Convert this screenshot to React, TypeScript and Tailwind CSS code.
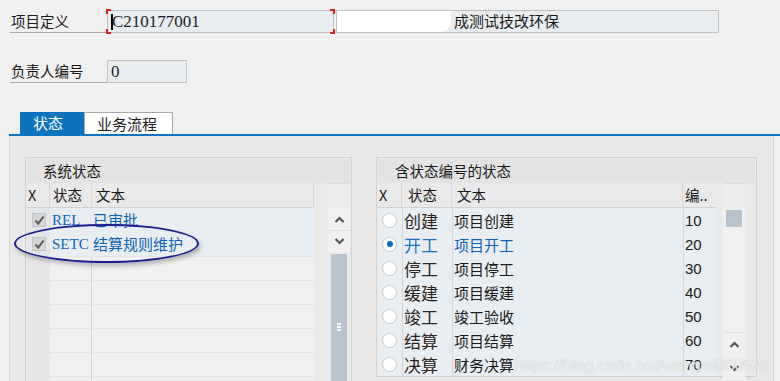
import React from 'react';

const sans = "font-['Noto_Sans_CJK_SC','Liberation_Sans',sans-serif]";
const serif = "font-['Liberation_Serif','Noto_Sans_CJK_SC',serif]";

const Check = () => (
    <span className="w-[14px] h-[14px] bg-[#d6d6d6] border border-[#c4c4c4] flex items-center justify-center">
        <svg width="11" height="11" viewBox="0 0 11 11">
            <path d="M1.5 5.5 L4.2 8.6 L9.5 1.5" stroke="#5a5a5a" strokeWidth="2" fill="none" />
        </svg>
    </span>
);

const Radio = ({ on }: { on?: boolean }) => (
    <span className="w-[15px] h-[15px] rounded-full bg-white border border-[#c8c8c8] flex items-center justify-center">
        {on && <span className="w-[6px] h-[6px] rounded-full bg-[#0a6ebd]" />}
    </span>
);

const ArrowUp = () => (
    <svg width="11" height="7" viewBox="0 0 11 7"><path d="M1.5 6 L5.5 2 L9.5 6" stroke="#555" strokeWidth="2.2" fill="none" /></svg>
);
const ArrowDown = () => (
    <svg width="11" height="7" viewBox="0 0 11 7"><path d="M1.5 1 L5.5 5 L9.5 1" stroke="#555" strokeWidth="2.2" fill="none" /></svg>
);

const statuses = [
    { s: '创建', t: '项目创建', n: '10' },
    { s: '开工', t: '项目开工', n: '20', on: true },
    { s: '停工', t: '项目停工', n: '30' },
    { s: '缓建', t: '项目缓建', n: '40' },
    { s: '竣工', t: '竣工验收', n: '50' },
    { s: '结算', t: '项目结算', n: '60' },
    { s: '决算', t: '财务决算', n: '70' },
];

export default function App() {
    return (
        <div className={`relative w-[780px] h-[381px] overflow-hidden bg-[#f0f0f0] text-[#1a1a1a] ${sans}`}>
            {/* header fields */}
            <div className="pt-[10px] pl-[10px]">
                <div className="flex h-[23px]">
                    <div className="w-[97px] h-[23px] border-b border-[#a8a8a8] text-[14.5px] leading-[22px] pl-[1px]">项目定义</div>
                    <div className="relative w-[227px] h-[23px] bg-[#e9ecef] border border-[#c0c0c0] flex items-center pl-[3px]">
                        <span className="w-[2px] h-[16px] bg-black" />
                        <span className={`${serif} text-[17px] text-[#1c1c2c] -ml-[1px]`}>C210177001</span>
                        <span className="absolute -left-[2px] -top-[2px] w-[5px] h-[5px] border-l-2 border-t-2 border-[#e0201c]" />
                        <span className="absolute -right-[2px] -top-[2px] w-[5px] h-[5px] border-r-2 border-t-2 border-[#e0201c]" />
                        <span className="absolute -left-[2px] -bottom-[2px] w-[5px] h-[5px] border-l-2 border-b-2 border-[#e0201c]" />
                        <span className="absolute -right-[2px] -bottom-[2px] w-[5px] h-[5px] border-r-2 border-b-2 border-[#e0201c]" />
                    </div>
                    <div className="w-[383px] h-[23px] bg-[#e9ecef] border border-[#c0c0c0] flex items-center ml-[2px] overflow-hidden">
                        <span className="w-[114px] h-full bg-white rounded-br-[10px] shrink-0" />
                        <span className="text-[15px] ml-[3px]">成测试技改环保</span>
                    </div>
                </div>
                <div className="flex h-[23px] mt-[27px]">
                    <div className="w-[97px] h-[23px] border-b border-[#a8a8a8] text-[14.5px] leading-[22px] pl-[1px]">负责人编号</div>
                    <div className="w-[80px] h-[23px] bg-[#e9ecef] border border-[#c0c0c0] flex items-center pl-[3px]">
                        <span className={`${serif} text-[17px] text-[#1c1c2c]`}>0</span>
                    </div>
                </div>
            </div>

            {/* tabs */}
            <div className="mt-[29px] ml-[20px] flex h-[22px]">
                <div className="w-[64px] bg-[#0b74bd] text-white text-[15px] leading-[22px] pl-[13px]">状态</div>
                <div className="w-[89px] bg-white border border-b-0 border-[#a8a8a8] text-[15px] leading-[21px] pl-[12px]">业务流程</div>
            </div>
            <div className="ml-[9px] h-[2px] bg-[#0b74bd]" />
            <div className="ml-[9px] w-[765px] h-[250px] bg-[#e8e8e8] border-l border-r border-[#d6d6d6] pt-[21px] pl-[15px] flex gap-[24px]">
                {/* left group */}
                <div className="w-[327px] h-[240px] border border-[#d2d2d2] bg-[#e9e9e9] p-[1px]">
                    <div className="h-[24px] bg-[#e3e3e3] text-[14.5px] leading-[24px] pl-[16px]">系统状态</div>
                    <div className="flex">
                        <div className="w-[287px]">
                            <div className="flex h-[25px] bg-[#e9e9e9] border-b border-[#d2d2d2] text-[14.5px] leading-[24px]">
                                <div className="w-[23px] border-r border-[#d6d6d6] pl-[1px]">X</div>
                                <div className="w-[42px] border-r border-[#d6d6d6] pl-[3px]">状态</div>
                                <div className="flex-1 border-r border-[#d6d6d6] pl-[4px]">文本</div>
                            </div>
                            {[
                                { s: 'REL', t: '已审批' },
                                { s: 'SETC', t: '结算规则维护' },
                            ].map(r => (
                                <div key={r.s} className="flex h-[24px] bg-[#e8edf2] items-center text-[#0c63b6]">
                                    <div className="w-[23px] h-full bg-[#e3e6ea] flex items-center justify-center pl-[1px]"><Check /></div>
                                    <div className={`w-[42px] ${serif} text-[15px] pl-[2px] whitespace-nowrap`}>{r.s}</div>
                                    <div className="flex-1 text-[15px] pl-[1px]">{r.t}</div>
                                </div>
                            ))}
                            {Array.from({ length: 6 }).map((_, i) => (
                                <div key={i} className="flex h-[24px] bg-[#f0f0f0] border-t border-[#e6e6e6]">
                                    <div className="w-[23px] h-full bg-[#e6e6e6]" />
                                    <div className="w-[42px] h-full border-r border-[#d2d2d2]" />
                                    <div className="flex-1" />
                                </div>
                            ))}
                        </div>
                        <div className="w-[14px]" />
                        <div className="w-[22px] flex flex-col">
                            <div className="h-[25px] bg-[#ececec] border-t border-[#dcdcdc]" />
                            <div className="h-[22px] bg-[#f0f0f0] flex items-center justify-center"><ArrowUp /></div>
                            <div className="h-[22px] bg-[#f0f0f0] border-t border-[#e0e0e0] flex items-center justify-center"><ArrowDown /></div>
                            <div className="flex-1 mx-[3px] mt-[2px] bg-[#b9c3cd] flex items-center justify-center">
                                <div className="flex flex-col gap-[1px]">
                                    <span className="w-[4px] h-[2px] bg-white" />
                                    <span className="w-[4px] h-[2px] bg-white" />
                                    <span className="w-[4px] h-[2px] bg-white" />
                                </div>
                            </div>
                        </div>
                    </div>
                </div>

                {/* right group */}
                <div className="w-[381px] h-[220px] border border-[#d2d2d2] bg-[#e9e9e9] p-[1px]">
                    <div className="h-[24px] bg-[#e3e3e3] text-[14.5px] leading-[24px] pl-[17px]">含状态编号的状态</div>
                    <div className="flex">
                        <div className="w-[338px]">
                            <div className="flex h-[25px] bg-[#e9e9e9] border-b border-[#d2d2d2] text-[14.5px] leading-[24px]">
                                <div className="w-[24px] border-r border-[#d6d6d6] pl-[1px]">X</div>
                                <div className="w-[50px] border-r border-[#d6d6d6] pl-[6px]">状态</div>
                                <div className="w-[231px] border-r border-[#d6d6d6] pl-[5px]">文本</div>
                                <div className="flex-1 pl-[2px]">编..</div>
                            </div>
                            {statuses.map(r => (
                                <div key={r.s} className="flex h-[24px] bg-[#e8edf2] items-center">
                                    <div className="w-[24px] h-full flex items-center pl-[4px]"><Radio on={r.on} /></div>
                                    <div className={`w-[50px] h-full border-l border-[#d6d6d6] text-[17px] leading-[25px] pl-[1px] ${r.on ? 'text-[#1a74c6]' : 'text-[#2a2320]'}`}>{r.s}</div>
                                    <div className={`w-[231px] h-full border-l border-[#d6d6d6] text-[15px] leading-[25px] pl-[1px] ${r.on ? 'text-[#0c63b6]' : ''}`}>{r.t}</div>
                                    <div className="flex-1 h-full border-l border-[#d6d6d6] text-[15px] leading-[25px] pl-[1px] font-['Liberation_Sans',sans-serif]">{r.n}</div>
                                </div>
                            ))}
                        </div>
                        <div className="w-[7px]" />
                        <div className="w-[22px] flex flex-col">
                            <div className="h-[25px] bg-[#ececec] border-t border-[#dcdcdc]" />
                            <div className="h-[124px] bg-[#f0f0f0] pt-[2px] px-[3px]">
                                <div className="h-[17px] bg-[#b9c3cd]" />
                            </div>
                            <div className="h-[24px] bg-[#f0f0f0] border-t border-[#e2e2e2] flex items-center justify-center"><ArrowUp /></div>
                            <div className="h-[24px] bg-[#f0f0f0] flex items-center justify-center"><ArrowDown /></div>
                        </div>
                    </div>
                </div>
            </div>

            {/* annotation ellipse */}
            <div className="absolute left-[14px] top-[224px] w-[185px] h-[39px] rounded-[50%] border-2 border-[#1c1f8c] shadow-[2px_3px_4px_rgba(0,0,0,0.25)]" />

            {/* watermark */}
            <div className="absolute left-[515px] top-[354px] text-[16px] font-['Liberation_Sans',sans-serif] text-white/75 [text-shadow:0_0_1px_rgba(120,120,120,0.5)]">
                https://blog.csdn.net/wanglei880526
            </div>
        </div>
    );
}
